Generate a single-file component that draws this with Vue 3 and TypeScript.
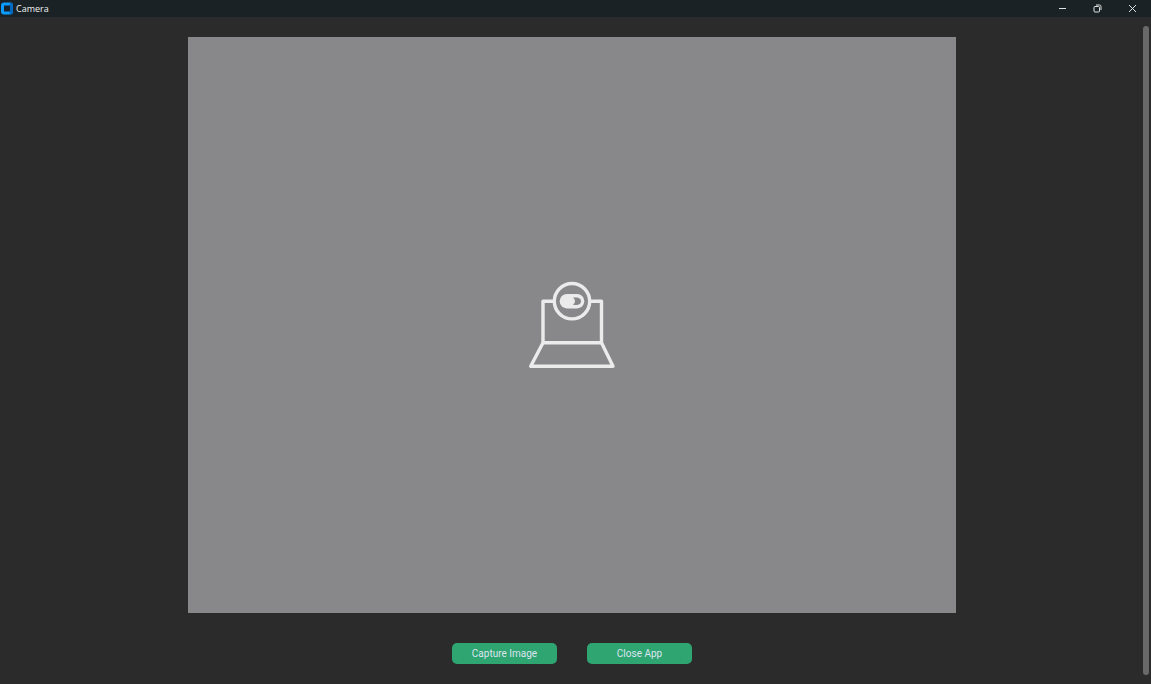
<script setup lang="ts">
import { ref } from 'vue'

const title = 'Camera'
const captures = ref(0)
const open = ref(true)

function capture(): void {
  captures.value += 1
}

function closeApp(): void {
  open.value = false
}
</script>

<template>
  <div v-if="open" class="window">
    <header class="titlebar">
      <svg class="logo" viewBox="0 0 13 13" aria-hidden="true">
        <rect x="1" y="0.5" width="12" height="12" rx="3" fill="#0a9bff" />
        <path d="M10 0.5A3 3 0 0 1 13 3.5V9.5A3 3 0 0 1 10 12.5L9.5 9V4z" fill="#0068bd" />
        <rect x="4" y="3.5" width="6" height="6" rx="0.5" fill="#17222b" />
      </svg>
      <h1 class="title">{{ title }}</h1>
      <nav class="controls" aria-label="Window">
        <button type="button" class="control" aria-label="Minimize">
          <svg viewBox="0 0 9 9"><path d="M1 4.5H8" /></svg>
        </button>
        <button type="button" class="control" aria-label="Restore">
          <svg viewBox="0 0 9 9">
            <rect x="1" y="2.5" width="5.5" height="5.5" rx="1" />
            <path d="M3 1H6.5A1.5 1.5 0 0 1 8 2.5V6" />
          </svg>
        </button>
        <button type="button" class="control" aria-label="Close" @click="closeApp">
          <svg viewBox="0 0 9 9"><path d="M1 1L8 8M8 1L1 8" /></svg>
        </button>
      </nav>
    </header>

    <div class="body">
      <main class="content">
        <section class="preview" aria-label="Camera preview">
          <svg class="webcam" viewBox="514 267 116 116" aria-hidden="true">
            <g fill="none" stroke="#ebebec" stroke-width="3.4" stroke-linejoin="round">
              <path d="M554 301.3H543V342.7L530.7 366.3H613L601.5 342.7V301.3H590" />
              <path d="M543 342.7H601.5" />
              <circle cx="572" cy="301.2" r="17.7" />
            </g>
            <rect x="559.7" y="294" width="24.6" height="14.4" rx="7.2" fill="#ebebec" />
            <path d="M573 297.6H577Q581 298 581 301.3T577 305H573Q577 301.3 573 297.6Z" fill="#88888a" />
          </svg>
        </section>
        <div class="actions">
          <button type="button" class="action" @click="capture">Capture Image</button>
          <button type="button" class="action" @click="closeApp">Close App</button>
        </div>
      </main>
      <div class="scrollbar" aria-hidden="true"></div>
    </div>
  </div>
</template>

<style>
body {
  margin: 0;
  background: #2b2b2b;
}
</style>

<style scoped>
.window {
  display: flex;
  flex-direction: column;
  height: 100vh;
  overflow: hidden;
  background: #2b2b2b;
}

.titlebar {
  display: flex;
  align-items: center;
  flex: none;
  height: 17px;
  background: #1b2225;
}

.logo {
  width: 13px;
  height: 13px;
  flex: none;
}

.title {
  flex: 1;
  margin: 0 0 0 3px;
  color: #f2f2f2;
  font: 400 9px/17px "Open Sans", "Noto Sans", sans-serif;
}

.controls {
  display: flex;
  padding-right: 1px;
}

.control {
  display: flex;
  align-items: center;
  justify-content: center;
  width: 35px;
  height: 17px;
  padding: 0;
  border: 0;
  background: transparent;
}

.control svg {
  width: 9px;
  height: 9px;
  fill: none;
  stroke: #dfe1e2;
  stroke-width: 1;
}

.body {
  display: flex;
  flex: 1;
  min-height: 0;
}

.content {
  display: flex;
  flex: 1;
  flex-direction: column;
  align-items: center;
  min-width: 0;
  padding: 20px 0 20px 1px;
}

.preview {
  display: flex;
  flex: 1;
  align-items: center;
  justify-content: center;
  min-height: 0;
  aspect-ratio: 4 / 3;
  background: #88888a;
}

.webcam {
  width: 116px;
  height: 116px;
}

.actions {
  display: flex;
  gap: 30px;
  margin-top: 30px;
}

.action {
  width: 105px;
  height: 21px;
  padding: 0;
  border: 0;
  border-radius: 5px;
  background: #2fa572;
  color: #dce4ee;
  font: 400 10px/21px Roboto, sans-serif;
}

.scrollbar {
  width: 6px;
  margin: 9px 2px 9px 0;
  border-radius: 3px;
  background: #696969;
}
</style>
